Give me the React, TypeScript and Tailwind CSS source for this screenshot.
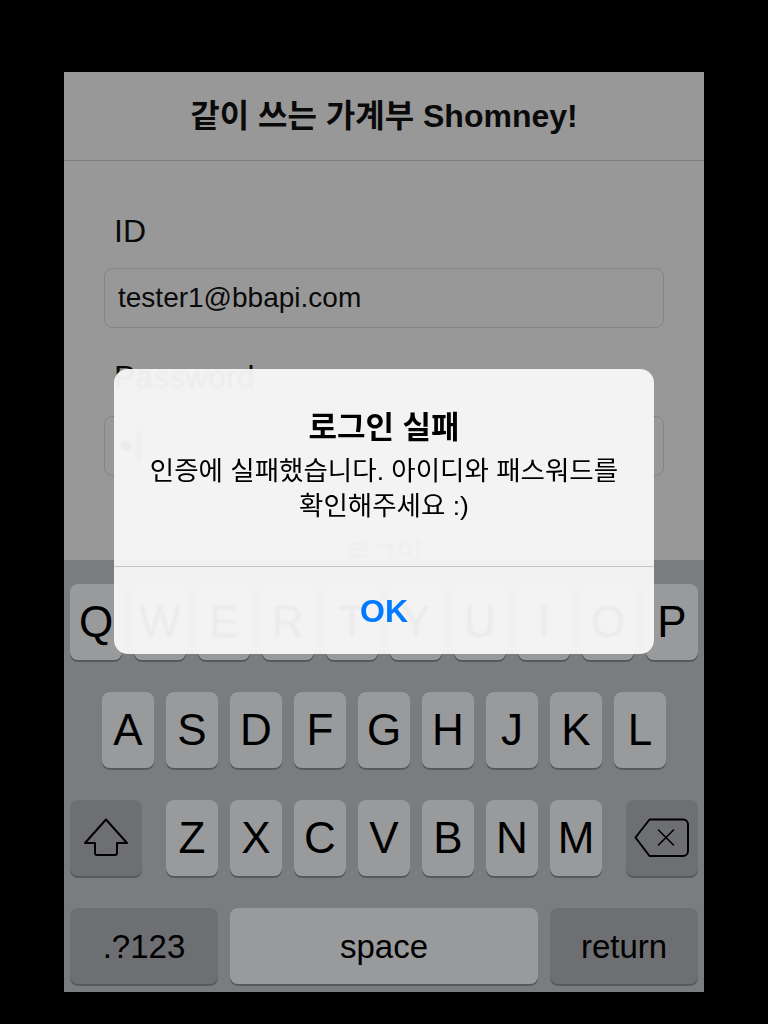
import React from 'react';

// iOS 7 style keyboard key
const Key = ({ label, wide, dark, className = '' }: { label?: React.ReactNode, wide?: string, dark?: boolean, className?: string }) => (
    <div
        className={`flex items-center justify-center h-[76px] rounded-[8px] text-black shadow-[0_2px_0_#58595c] ${dark ? 'bg-[#6e6f72]' : 'bg-[#999a9c]'} ${wide ?? 'w-[52px]'} ${className}`}
    >
        {label}
    </div>
);

const ShiftIcon = () => (
    <svg width="46" height="40" viewBox="0 0 46 40" fill="none">
        <path
            d="M23 1.5 L44 25 H34 V35 a2 2 0 0 1 -2 2 H14 a2 2 0 0 1 -2 -2 V25 H2 Z"
            stroke="#000"
            strokeWidth="2"
            strokeLinejoin="round"
        />
    </svg>
);

const DeleteIcon = () => (
    <svg width="56" height="40" viewBox="0 0 56 40" fill="none">
        <path
            d="M1.5 19.5 L15.5 1.5 H49 a5 5 0 0 1 5 5 V33 a5 5 0 0 1 -5 5 H15.5 Z"
            stroke="#000"
            strokeWidth="2"
            strokeLinejoin="round"
        />
        <path d="M24.5 12 L39.5 27 M39.5 12 L24.5 27" stroke="#000" strokeWidth="1.6" strokeLinecap="round" />
    </svg>
);

const Keyboard = () => {
    const row1 = ['Q', 'W', 'E', 'R', 'T', 'Y', 'U', 'I', 'O', 'P'];
    const row2 = ['A', 'S', 'D', 'F', 'G', 'H', 'J', 'K', 'L'];
    const row3 = ['Z', 'X', 'C', 'V', 'B', 'N', 'M'];

    return (
        <div className="h-[432px] bg-[#7b7c7f] pt-[24px] flex flex-col gap-[32px] text-[44px] leading-none">
            <div className="flex gap-[12px] pl-[6px]">
                {row1.map(k => <Key key={k} label={k} />)}
            </div>
            <div className="flex gap-[12px] justify-center">
                {row2.map(k => <Key key={k} label={k} />)}
            </div>
            <div className="flex pl-[6px]">
                <Key dark wide="w-[72px]" label={<ShiftIcon />} />
                <div className="flex gap-[12px] ml-[24px]">
                    {row3.map(k => <Key key={k} label={k} />)}
                </div>
                <Key dark wide="w-[72px]" className="ml-[24px]" label={<DeleteIcon />} />
            </div>
            <div className="flex gap-[12px] pl-[6px] text-[33px]">
                <Key dark wide="w-[148px]" label=".?123" />
                <Key wide="w-[308px]" label="space" />
                <Key dark wide="w-[148px]" label="return" />
            </div>
        </div>
    );
};

const App = () => {
    return (
        <div className="min-h-[1024px] bg-black pt-[72px] font-['Liberation_Sans','Noto_Sans_CJK_KR',sans-serif]">
            <div className="relative mx-auto w-[640px] h-[920px] bg-[#989898] flex flex-col overflow-hidden">
                {/* Navigation bar */}
                <div className="h-[89px] border-b border-[#7b7b7b] flex items-center justify-center text-[32px] font-bold text-[#0a0a0a] whitespace-nowrap">
                    같이 쓰는 가계부 Shomney!
                </div>

                {/* Login form */}
                <div className="flex-1 overflow-hidden px-[40px] pt-[50px] text-[#0a0a0a]">
                    <div className="pl-[10px] text-[32px] leading-[40px]">ID</div>
                    <div className="mt-[17px] h-[60px] rounded-[8px] border border-[#848484] flex items-center pl-[13px] text-[28px]">
                        tester1@bbapi.com
                    </div>
                    <div className="mt-[29px] pl-[10px] text-[32px] leading-[40px]">Password</div>
                    <div className="mt-[19px] h-[60px] rounded-[8px] border border-[#848484] flex items-center pl-[16px] gap-[6px]">
                        <div className="w-[10px] h-[10px] rounded-full bg-black" />
                        <div className="w-[3px] h-[32px] bg-[#3a3a3a]" />
                    </div>
                    <div className="mt-[60px] text-center text-[28px] leading-[40px] text-[#303030]">로그인</div>
                </div>

                <Keyboard />

                {/* Alert */}
                <div className="absolute left-[50px] top-[297px] w-[540px] h-[285px] rounded-[14px] bg-[#f8f8f8]/95 backdrop-blur-[1px] flex flex-col text-black">
                    <div className="h-[197px] pt-[40px] text-center">
                        <div className="text-[31px] font-bold leading-[38px]">로그인 실패</div>
                        <div className="mt-[7px] text-[26.5px] leading-[35px] whitespace-nowrap">
                            인증에 실패했습니다. 아이디와 패스워드를<br />확인해주세요 :)
                        </div>
                    </div>
                    <div className="h-px bg-[#c4c4c4]" />
                    <div className="flex-1 flex items-center justify-center text-[32px] font-bold text-[#007aff]">
                        OK
                    </div>
                </div>
            </div>
        </div>
    );
};

export default App;
